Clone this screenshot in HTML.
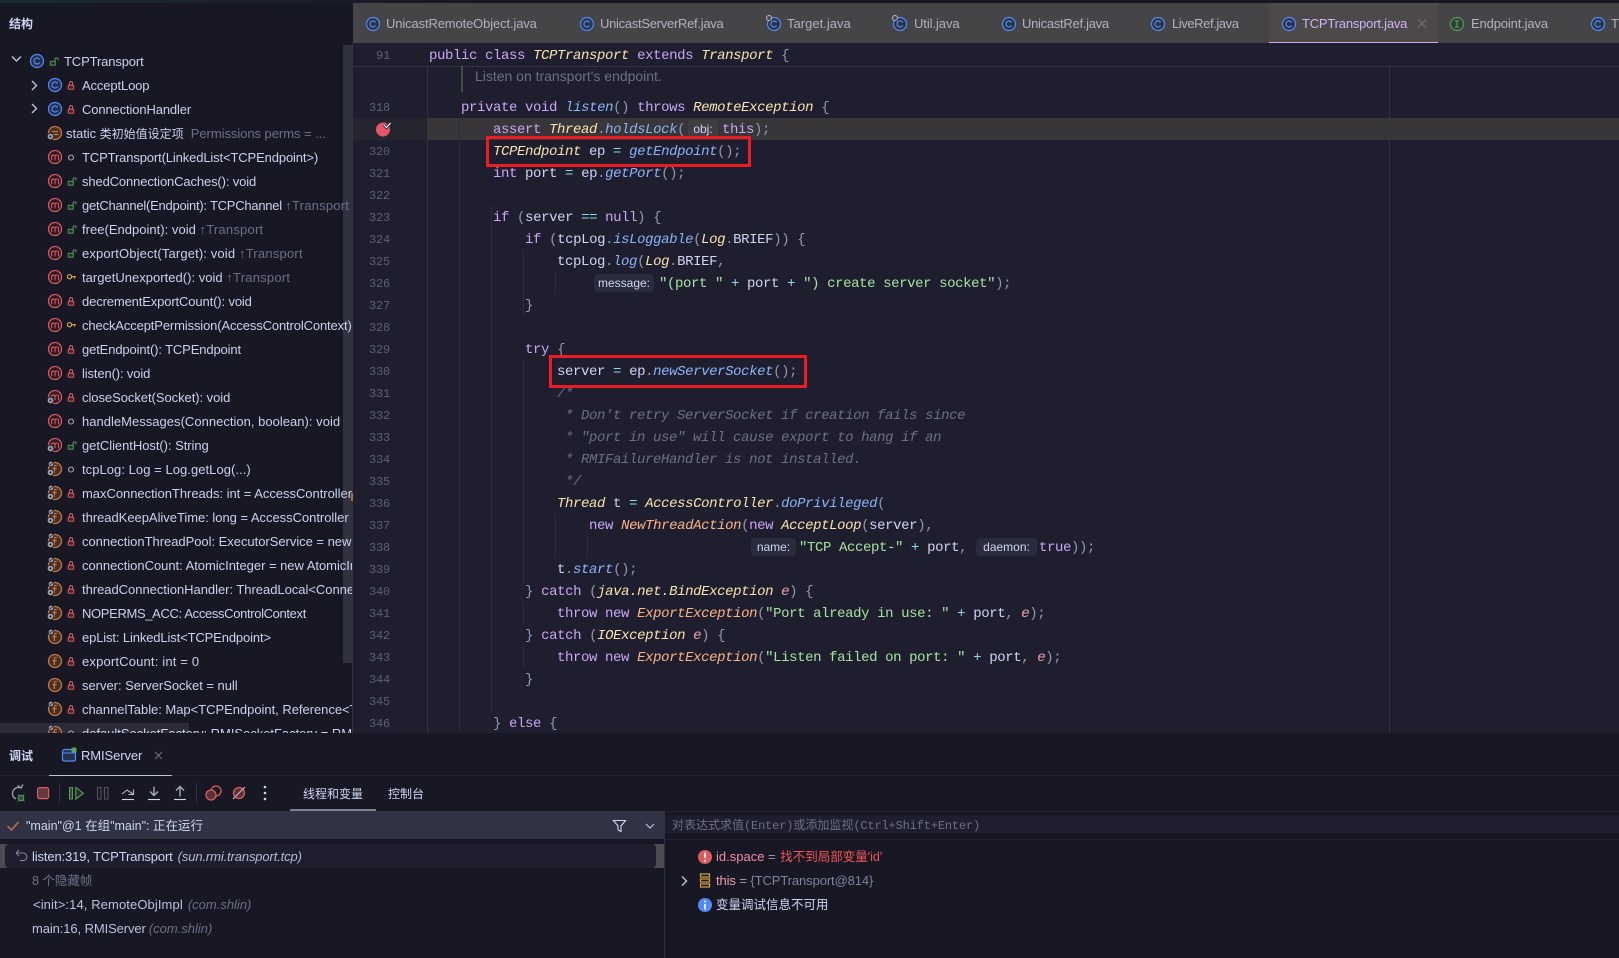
<!DOCTYPE html>
<html><head><meta charset="utf-8"><title>TCPTransport</title>
<style>
html,body{margin:0;padding:0;width:1619px;height:958px;overflow:hidden;background:#181825}
body{position:relative;font-family:"Liberation Sans","Noto Sans CJK SC",sans-serif;font-size:13px;color:#cdd6f4}
.a{position:absolute;white-space:pre}
.b{position:absolute}
.r{position:absolute;left:82px;white-space:pre;line-height:20px;font-size:13px;color:#c9d1ec;letter-spacing:-.13px}
.r i{font-style:normal;font-size:12px;letter-spacing:0}
.g{color:#6c7086}
.u{color:#6c7086;letter-spacing:.22px}
.tab{position:absolute;top:14px;line-height:20px;font-size:13px;color:#aeb3c2;white-space:pre;letter-spacing:-.08px}
.l{position:absolute;left:429px;height:22px;line-height:22px;margin-top:1px;font-family:"Liberation Mono",monospace;font-size:14px;letter-spacing:-.4px;white-space:pre;color:#cdd6f4}
.n{position:absolute;right:1229px;height:22px;line-height:22px;margin-top:1px;font-family:"Liberation Mono",monospace;font-size:12px;color:#5c6075;letter-spacing:-.2px}
.k{color:#cba6f7}.t{color:#f9e2af;font-style:italic}.m{color:#89b4fa;font-style:italic}.s{color:#a6e3a1}
.c{color:#6c7086;font-style:italic}.o{color:#89dceb}.p{color:#9399b2}.e{color:#eba0ac;font-style:italic}.x{color:#fab387;font-style:italic}
.h{position:absolute;height:18px;line-height:18px;border-radius:4px;background:#2a2b3c;color:#cdd6f4;font-size:12px;text-align:center;font-family:"Liberation Sans",sans-serif}
.red{position:absolute;box-sizing:border-box;border:3px solid #ed1c24}
.ig{position:absolute;width:1px;background:#2c2d3e}
svg{position:absolute;overflow:visible}
</style></head><body>

<!-- top strip -->
<div class="b" style="left:0;top:0;width:1619px;height:3px;background:linear-gradient(90deg,#1b2b36,#181825 30%)"></div>

<!-- editor bg -->
<div class="b" style="left:353px;top:43px;width:1266px;height:690px;background:#1e1e2e"></div>
<div class="b" style="left:353px;top:66px;width:1266px;height:1px;background:#313244"></div>
<div class="b" style="left:427px;top:66px;width:1px;height:667px;background:#313244"></div>
<div class="b" style="left:1389px;top:66px;width:1px;height:667px;background:#313244"></div>
<div class="b" style="left:352px;top:43px;width:1px;height:690px;background:#313244"></div>
<div class="b" style="left:461px;top:66px;width:2px;height:26px;background:#44503f"></div>

<!-- current line -->
<div class="b" style="left:353px;top:118px;width:74px;height:22px;background:#25252f"></div>
<div class="b" style="left:428px;top:118px;width:1191px;height:22px;background:#383638"></div>

<!-- indent guides -->
<div class="ig" style="left:459px;top:118px;height:615px"></div>
<div class="ig" style="left:491px;top:206px;height:506px"></div>
<div class="ig" style="left:523px;top:250px;height:66px"></div>
<div class="ig" style="left:523px;top:360px;height:226px"></div>
<div class="ig" style="left:523px;top:602px;height:22px"></div>
<div class="ig" style="left:523px;top:646px;height:22px"></div>
<div class="ig" style="left:555px;top:272px;height:22px"></div>
<div class="ig" style="left:555px;top:514px;height:44px"></div>
<div class="ig" style="left:587px;top:536px;height:22px"></div>

<!-- tabs -->
<div class="b" style="left:353px;top:3px;width:1266px;height:40px;background:#454547"></div>
<div class="b" style="left:1269px;top:3px;width:169px;height:40px;background:#4e4949"></div>
<div class="b" style="left:1269px;top:42px;width:169px;height:1px;background:#cba6f7"></div>
<div class="tab" style="left:386px;letter-spacing:-.13px">UnicastRemoteObject.java</div>
<div class="tab" style="left:600px;letter-spacing:-.28px">UnicastServerRef.java</div>
<div class="tab" style="left:787px;letter-spacing:.02px">Target.java</div>
<div class="tab" style="left:914px">Util.java</div>
<div class="tab" style="left:1022px;letter-spacing:-.28px">UnicastRef.java</div>
<div class="tab" style="left:1172px;letter-spacing:-.42px">LiveRef.java</div>
<div class="tab" style="left:1302px;color:#cdb4f5;letter-spacing:-.2px">TCPTransport.java</div>
<div class="tab" style="left:1471px;letter-spacing:-.14px">Endpoint.java</div>
<div class="tab" style="left:1611px">T</div>

<!-- line numbers -->
<div class="n" style="top:44px">91</div>
<div class="n" style="top:96px">318</div>
<div class="n" style="top:140px">320</div>
<div class="n" style="top:162px">321</div>
<div class="n" style="top:184px">322</div>
<div class="n" style="top:206px">323</div>
<div class="n" style="top:228px">324</div>
<div class="n" style="top:250px">325</div>
<div class="n" style="top:272px">326</div>
<div class="n" style="top:294px">327</div>
<div class="n" style="top:316px">328</div>
<div class="n" style="top:338px">329</div>
<div class="n" style="top:360px">330</div>
<div class="n" style="top:382px">331</div>
<div class="n" style="top:404px">332</div>
<div class="n" style="top:426px">333</div>
<div class="n" style="top:448px">334</div>
<div class="n" style="top:470px">335</div>
<div class="n" style="top:492px">336</div>
<div class="n" style="top:514px">337</div>
<div class="n" style="top:536px">338</div>
<div class="n" style="top:558px">339</div>
<div class="n" style="top:580px">340</div>
<div class="n" style="top:602px">341</div>
<div class="n" style="top:624px">342</div>
<div class="n" style="top:646px">343</div>
<div class="n" style="top:668px">344</div>
<div class="n" style="top:690px">345</div>
<div class="n" style="top:712px;height:20px;overflow:hidden">346</div>

<!-- code -->
<div class="l" style="top:44px"><span class="k">public class</span> <span class="t">TCPTransport</span> <span class="k">extends</span> <span class="t">Transport</span> <span class="p">{</span></div>
<div class="a" style="left:475px;top:66px;line-height:21px;color:#6c7086;font-size:14px;letter-spacing:-.01px">Listen on transport's endpoint.</div>
<div class="l" style="top:96px">    <span class="k">private void</span> <span class="m">listen</span><span class="p">()</span> <span class="k">throws</span> <span class="t">RemoteException</span> <span class="p">{</span></div>
<div class="l" style="top:118px">        <span class="k">assert</span> <span class="t">Thread</span><span class="p">.</span><span class="m">holdsLock</span><span class="p">(</span></div>
<div class="h" style="left:688px;top:120px;width:30px;background:#403e42">obj:</div>
<div class="l" style="top:118px;left:722px"><span class="k">this</span><span class="p">);</span></div>
<div class="l" style="top:140px">        <span class="t">TCPEndpoint</span> ep <span class="o">=</span> <span class="m">getEndpoint</span><span class="p">();</span></div>
<div class="l" style="top:162px">        <span class="k">int</span> port <span class="o">=</span> ep<span class="p">.</span><span class="m">getPort</span><span class="p">();</span></div>
<div class="l" style="top:206px">        <span class="k">if</span> <span class="p">(</span>server <span class="o">==</span> <span class="k">null</span><span class="p">) {</span></div>
<div class="l" style="top:228px">            <span class="k">if</span> <span class="p">(</span>tcpLog<span class="p">.</span><span class="m">isLoggable</span><span class="p">(</span><span class="t">Log</span><span class="p">.</span>BRIEF<span class="p">)) {</span></div>
<div class="l" style="top:250px">                tcpLog<span class="p">.</span><span class="m">log</span><span class="p">(</span><span class="t">Log</span><span class="p">.</span>BRIEF<span class="p">,</span></div>
<div class="h" style="left:594px;top:274px;width:60px">message:</div>
<div class="l" style="top:272px;left:659px"><span class="s">"(port "</span> <span class="o">+</span> port <span class="o">+</span> <span class="s">") create server socket"</span><span class="p">);</span></div>
<div class="l" style="top:294px">            <span class="p">}</span></div>
<div class="l" style="top:338px">            <span class="k">try</span> <span class="p">{</span></div>
<div class="l" style="top:360px">                server <span class="o">=</span> ep<span class="p">.</span><span class="m">newServerSocket</span><span class="p">();</span></div>
<div class="l" style="top:382px">                <span class="c">/*</span></div>
<div class="l" style="top:404px">                <span class="c"> * Don't retry ServerSocket if creation fails since</span></div>
<div class="l" style="top:426px">                <span class="c"> * "port in use" will cause export to hang if an</span></div>
<div class="l" style="top:448px">                <span class="c"> * RMIFailureHandler is not installed.</span></div>
<div class="l" style="top:470px">                <span class="c"> */</span></div>
<div class="l" style="top:492px">                <span class="t">Thread</span> t <span class="o">=</span> <span class="t">AccessController</span><span class="p">.</span><span class="m">doPrivileged</span><span class="p">(</span></div>
<div class="l" style="top:514px">                    <span class="k">new</span> <span class="x">NewThreadAction</span><span class="p">(</span><span class="k">new</span> <span class="t">AcceptLoop</span><span class="p">(</span>server<span class="p">),</span></div>
<div class="h" style="left:751px;top:538px;width:45px">name:</div>
<div class="l" style="top:536px;left:799px"><span class="s">"TCP Accept-"</span> <span class="o">+</span> port<span class="p">,</span></div>
<div class="h" style="left:976px;top:538px;width:61px">daemon:</div>
<div class="l" style="top:536px;left:1039px"><span class="k">true</span><span class="p">));</span></div>
<div class="l" style="top:558px">                t<span class="p">.</span><span class="m">start</span><span class="p">();</span></div>
<div class="l" style="top:580px">            <span class="p">}</span> <span class="k">catch</span> <span class="p">(</span><span class="t">java.net.BindException</span> <span class="e">e</span><span class="p">) {</span></div>
<div class="l" style="top:602px">                <span class="k">throw new</span> <span class="x">ExportException</span><span class="p">(</span><span class="s">"Port already in use: "</span> <span class="o">+</span> port<span class="p">,</span> <span class="e">e</span><span class="p">);</span></div>
<div class="l" style="top:624px">            <span class="p">}</span> <span class="k">catch</span> <span class="p">(</span><span class="t">IOException</span> <span class="e">e</span><span class="p">) {</span></div>
<div class="l" style="top:646px">                <span class="k">throw new</span> <span class="x">ExportException</span><span class="p">(</span><span class="s">"Listen failed on port: "</span> <span class="o">+</span> port<span class="p">,</span> <span class="e">e</span><span class="p">);</span></div>
<div class="l" style="top:668px">            <span class="p">}</span></div>
<div class="l" style="top:712px;height:20px;overflow:hidden">        <span class="p">}</span> <span class="k">else</span> <span class="p">{</span></div>

<!-- red boxes -->
<div class="red" style="left:486px;top:136px;width:265px;height:31px"></div>
<div class="red" style="left:549px;top:355px;width:258px;height:33px"></div>

<!-- left tree -->
<div class="a" style="left:9px;top:14px;line-height:20px;font-size:12px;font-weight:bold;color:#cdd6f4">结构</div>
<div class="b" style="left:0;top:44px;width:352px;height:689px;overflow:hidden">
<div class="b" style="left:343px;top:1px;width:9px;height:618px;background:#313240"></div>
<div style="position:absolute;left:0;top:-44px;width:352px;height:733px">
<div class="r" style="left:64px;top:52px">TCPTransport</div>
<div class="r" style="top:76px">AcceptLoop</div>
<div class="r" style="top:100px">ConnectionHandler</div>
<div class="r" style="left:66px;top:124px;letter-spacing:-.05px">static <i>类初始值设定项</i>  <span class="g">Permissions perms = ...</span></div>
<div class="r" style="top:148px">TCPTransport(LinkedList&lt;TCPEndpoint&gt;)</div>
<div class="r" style="top:172px">shedConnectionCaches(): void</div>
<div class="r" style="top:196px;letter-spacing:-.25px">getChannel(Endpoint): TCPChannel <span class="u">↑Transport</span></div>
<div class="r" style="top:220px;letter-spacing:.02px">free(Endpoint): void <span class="u">↑Transport</span></div>
<div class="r" style="top:244px;letter-spacing:.14px">exportObject(Target): void <span class="u">↑Transport</span></div>
<div class="r" style="top:268px;letter-spacing:.02px">targetUnexported(): void <span class="u">↑Transport</span></div>
<div class="r" style="top:292px">decrementExportCount(): void</div>
<div class="r" style="top:316px">checkAcceptPermission(AccessControlContext)</div>
<div class="r" style="top:340px">getEndpoint(): TCPEndpoint</div>
<div class="r" style="top:364px">listen(): void</div>
<div class="r" style="top:388px;letter-spacing:-.05px">closeSocket(Socket): void</div>
<div class="r" style="top:412px;letter-spacing:.02px">handleMessages(Connection, boolean): void</div>
<div class="r" style="top:436px;letter-spacing:-.05px">getClientHost(): String</div>
<div class="r" style="top:460px;letter-spacing:.05px">tcpLog: Log = Log.getLog(...)</div>
<div class="r" style="top:484px;letter-spacing:-.03px">maxConnectionThreads: int = AccessController</div>
<div class="r" style="top:508px;letter-spacing:-.03px">threadKeepAliveTime: long = AccessController</div>
<div class="r" style="top:532px;letter-spacing:-.03px">connectionThreadPool: ExecutorService = new</div>
<div class="r" style="top:556px;letter-spacing:-.03px">connectionCount: AtomicInteger = new AtomicInteger</div>
<div class="r" style="top:580px;letter-spacing:-.03px">threadConnectionHandler: ThreadLocal&lt;ConnectionHandler&gt;</div>
<div class="r" style="top:604px;letter-spacing:-.35px">NOPERMS_ACC: AccessControlContext</div>
<div class="r" style="top:628px">epList: LinkedList&lt;TCPEndpoint&gt;</div>
<div class="r" style="top:652px;letter-spacing:.17px">exportCount: int = 0</div>
<div class="r" style="top:676px;letter-spacing:-.03px">server: ServerSocket = null</div>
<div class="r" style="top:700px;letter-spacing:-.03px">channelTable: Map&lt;TCPEndpoint, Reference&lt;Target&gt;&gt;</div>
<div class="r" style="top:724px;letter-spacing:-.03px">defaultSocketFactory: RMISocketFactory = RMISocketFactory</div>
<div class="b" style="left:0;top:723px;width:189px;height:10px;background:rgba(255,255,255,.09)"></div>

<svg width="352" height="733" style="left:0;top:0">
<defs>
<g id="C"><circle cx="8" cy="8" r="6.5" fill="#23304f" stroke="#548af7" stroke-width="1.2"/><path d="M10.3 6.1A3 3 0 1 0 10.3 9.9" fill="none" stroke="#548af7" stroke-width="1.2" stroke-linecap="round"/></g>
<g id="M"><circle cx="8" cy="8" r="6.5" fill="#2c1b23" stroke="#d8595c" stroke-width="1.3"/><path d="M4.6 11.3V6.2M4.6 7.3c0-1.7 3.4-1.7 3.400 0V11.300M8 7.3c0-1.7 3.4-1.7 3.400 0V11.300" fill="none" stroke="#d8595c" stroke-width="1.1"/></g>
<g id="F"><circle cx="8" cy="8" r="6.5" fill="#4a2f20" stroke="#c2794a" stroke-width="1.3"/><path d="M10 4.6c-1.6-.5-2.7 0-2.7 1.5V12M5.5 7.6h4.2" fill="none" stroke="#c2794a" stroke-width="1.2"/></g>
<g id="S"><circle cx="8" cy="8" r="6.5" fill="#4a2f20" stroke="#c2794a" stroke-width="1.3"/><path d="M4.8 6.5h6.4M4.8 9.5h6.4" fill="none" stroke="#c2794a" stroke-width="1.2"/></g>
<g id="pb"><circle cx="3.5" cy="11.500" r="3.300" fill="#a2a3ad" stroke="#181825" stroke-width=".8"/><circle cx="3.5" cy="11.500" r="1.100" fill="#2a2a36"/></g>
<g id="pt"><circle cx="4" cy="3" r="2.700" fill="#a2a3ad" stroke="#181825" stroke-width=".7"/><path d="M2.800 4.200L5.500 1.600" stroke="#2a2a36" stroke-width="1"/></g>
<g id="lk"><rect x="3.3" y="5.3" width="5.4" height="3.9" fill="#3d2128" stroke="#db5c5c"/><path d="M4.5 5V3a1.5 1.5 0 0 1 3 0V5" fill="none" stroke="#db5c5c"/></g>
<g id="op"><rect x="3.3" y="5.3" width="4.9" height="3.9" fill="#203020" stroke="#57965c"/><path d="M8 5V3.4a1.5 1.5 0 0 1 3 0V4.5" fill="none" stroke="#57965c"/></g>
<g id="oo"><circle cx="6" cy="5.5" r="2.5" fill="none" stroke="#a9acb8" stroke-width="1.1"/></g>
<g id="pr"><circle cx="4.500" cy="4.700" r="2.100" fill="none" stroke="#d9b04a" stroke-width="1.100"/><path d="M6.600 4.700h4.400M9.500 4.700v1.800" fill="none" stroke="#d9b04a" stroke-width="1.100"/></g>
<path id="cr" d="M0 0l4.500 4.500l-4.500 4.500" fill="none" stroke="#bac2de" stroke-width="1.4"/>
</defs>
<path d="M12 56.500l4.500 4.500l4.500-4.500" fill="none" stroke="#bac2de" stroke-width="1.400"/>
<use href="#cr" x="32" y="81"/><use href="#cr" x="32" y="104"/>
<use href="#C" x="29" y="53"/><use href="#op" x="47" y="56"/>
<use href="#C" x="47" y="77"/><use href="#lk" x="65" y="80"/>
<use href="#C" x="47" y="101"/><use href="#lk" x="65" y="104"/>
<use href="#S" x="47" y="125"/><use href="#pb" x="47" y="125"/>
<use href="#M" x="47" y="149"/><use href="#oo" x="65" y="152"/>
<use href="#M" x="47" y="173"/><use href="#op" x="65" y="176"/>
<use href="#M" x="47" y="197"/><use href="#op" x="65" y="200"/>
<use href="#M" x="47" y="221"/><use href="#op" x="65" y="224"/>
<use href="#M" x="47" y="245"/><use href="#op" x="65" y="248"/>
<use href="#M" x="47" y="269"/><use href="#pr" x="65" y="272"/>
<use href="#M" x="47" y="293"/><use href="#lk" x="65" y="296"/>
<use href="#M" x="47" y="317"/><use href="#pr" x="65" y="320"/>
<use href="#M" x="47" y="341"/><use href="#lk" x="65" y="344"/>
<use href="#M" x="47" y="365"/><use href="#lk" x="65" y="368"/>
<use href="#M" x="47" y="389"/><use href="#pb" x="47" y="389"/><use href="#lk" x="65" y="392"/>
<use href="#M" x="47" y="413"/><use href="#oo" x="65" y="416"/>
<use href="#M" x="47" y="437"/><use href="#pb" x="47" y="437"/><use href="#op" x="65" y="440"/>
<use href="#F" x="47" y="461"/><use href="#pb" x="47" y="461"/><use href="#pt" x="47" y="461"/><use href="#oo" x="65" y="464"/>
<use href="#F" x="47" y="485"/><use href="#pb" x="47" y="485"/><use href="#pt" x="47" y="485"/><use href="#lk" x="65" y="488"/>
<use href="#F" x="47" y="509"/><use href="#pb" x="47" y="509"/><use href="#pt" x="47" y="509"/><use href="#lk" x="65" y="512"/>
<use href="#F" x="47" y="533"/><use href="#pb" x="47" y="533"/><use href="#pt" x="47" y="533"/><use href="#lk" x="65" y="536"/>
<use href="#F" x="47" y="557"/><use href="#pb" x="47" y="557"/><use href="#pt" x="47" y="557"/><use href="#lk" x="65" y="560"/>
<use href="#F" x="47" y="581"/><use href="#pb" x="47" y="581"/><use href="#pt" x="47" y="581"/><use href="#lk" x="65" y="584"/>
<use href="#F" x="47" y="605"/><use href="#pb" x="47" y="605"/><use href="#pt" x="47" y="605"/><use href="#lk" x="65" y="608"/>
<use href="#F" x="47" y="629"/><use href="#pt" x="47" y="629"/><use href="#lk" x="65" y="632"/>
<use href="#F" x="47" y="653"/><use href="#lk" x="65" y="656"/>
<use href="#F" x="47" y="677"/><use href="#lk" x="65" y="680"/>
<use href="#F" x="47" y="701"/><use href="#pt" x="47" y="701"/><use href="#lk" x="65" y="704"/>
<use href="#F" x="47" y="725"/><use href="#pt" x="47" y="725"/><use href="#oo" x="65" y="728"/>
</svg>
</div>
</div>

<!-- bottom panel -->
<div class="b" style="left:0;top:733px;width:1619px;height:225px;background:#181825"></div>
<div class="b" style="left:0;top:775px;width:1619px;height:1px;background:#222232"></div>
<div class="a" style="left:9px;top:746px;line-height:20px;font-size:12px;font-weight:bold">调试</div>
<div class="a" style="left:81px;top:746px;line-height:20px;font-size:13px;color:#cdd6f4;letter-spacing:-.1px">RMIServer</div>
<div class="b" style="left:49px;top:775px;width:123px;height:1px;background:#bac2de"></div>
<div class="a" style="left:303px;top:784px;line-height:20px;font-size:12px">线程和变量</div>
<div class="a" style="left:388px;top:784px;line-height:20px;font-size:12px">控制台</div>
<div class="b" style="left:290px;top:809px;width:86px;height:2px;background:#7f8091"></div>

<!-- thread bar -->
<div class="b" style="left:0;top:811px;width:664px;height:28px;background:#313244"></div>
<div class="a" style="left:26px;top:816px;line-height:20px;font-size:12.500px">"main"@1 在组"main": 正在运行</div>

<!-- frames -->
<div class="b" style="left:0;top:844px;width:664px;height:24px;background:#4e4c50"></div>
<div class="b" style="left:5px;top:844px;width:651px;height:24px;background:#1e1e2e;border-radius:4px"></div>
<div class="a" style="left:32px;top:847px;line-height:20px;font-size:13px;letter-spacing:-.13px">listen:319, TCPTransport<span style="font-style:italic;color:#b4bbd8;margin-left:5px">(sun.rmi.transport.tcp)</span></div>
<div class="a" style="left:32px;top:871px;line-height:20px;font-size:12.500px;color:#6c7086">8 个隐藏帧</div>
<div class="a" style="left:33px;top:895px;line-height:20px;font-size:13px;color:#bac2de;letter-spacing:.1px">&lt;init&gt;:14, RemoteObjImpl<span class="g" style="font-style:italic;margin-left:5px;letter-spacing:0">(com.shlin)</span></div>
<div class="a" style="left:32px;top:919px;line-height:20px;font-size:13px;color:#bac2de;letter-spacing:-.1px">main:16, RMIServer<span class="g" style="font-style:italic;margin-left:3px;letter-spacing:0">(com.shlin)</span></div>

<!-- right debugger -->
<div class="b" style="left:664px;top:811px;width:1px;height:147px;background:#313244"></div>
<div class="b" style="left:665px;top:811px;width:954px;height:1px;background:#222232"></div>
<div class="b" style="left:665px;top:816px;width:954px;height:17px;background:#1e1e2e"></div>
<div class="b" style="left:665px;top:839px;width:954px;height:1px;background:#222232"></div>
<div class="a" style="left:672px;top:816px;line-height:20px;font-size:12px;color:#6c7086;font-family:'Liberation Mono','Noto Sans CJK SC',monospace;letter-spacing:-.16px"><span style="letter-spacing:0">对表达式求值</span>(Enter)<span style="letter-spacing:0">或添加监视</span>(Ctrl+Shift+Enter)</div>
<div class="a" style="left:716px;top:847px;line-height:20px;font-size:13px"><span style="color:#f38ba8">id.space</span> <span style="color:#9399b2">=</span> <span style="color:#f25555;font-size:12.500px;margin-left:1px">找不到局部变量'id'</span></div>
<div class="a" style="left:716px;top:871px;line-height:20px;font-size:13px;letter-spacing:-.1px"><span style="color:#eba0ac">this</span> <span style="color:#9399b2">=</span> <span style="color:#7f849c">{TCPTransport@814}</span></div>
<div class="a" style="left:716px;top:895px;line-height:20px;font-size:12.500px;color:#cdd6f4">变量调试信息不可用</div>

<!-- icons overlay -->
<svg width="1619" height="958" style="left:0;top:0;pointer-events:none">
<defs>
<g id="CC"><circle cx="7" cy="7" r="6.500" fill="#2a3348" stroke="#548af7" stroke-width="1.200"/><path d="M9.300 5.100A3 3 0 1 0 9.300 8.900" fill="none" stroke="#548af7" stroke-width="1.200" stroke-linecap="round"/></g>
</defs>
<!-- tab icons -->
<use href="#CC" x="366" y="17"/>
<use href="#CC" x="580" y="17"/>
<use href="#CC" x="767" y="17"/><circle cx="769" cy="18" r="2.500" fill="#45475a" stroke="#bbb" stroke-width="1"/>
<use href="#CC" x="893" y="17"/><circle cx="895" cy="18" r="2.500" fill="#45475a" stroke="#bbb" stroke-width="1"/>
<use href="#CC" x="1002" y="17"/>
<use href="#CC" x="1151" y="17"/>
<use href="#CC" x="1282" y="17"/>
<circle cx="1457" cy="24" r="6.500" fill="#2f4030" stroke="#57965c" stroke-width="1.200"/><path d="M1455 21h4M1457 21v6M1455 27h4" stroke="#57965c" stroke-width="1.200" fill="none"/>
<use href="#CC" x="1591" y="17"/>
<path d="M1418 19.500l8 8M1426 19.500l-8 8" stroke="#6c7086" stroke-width="1.100"/>

<!-- breakpoint -->
<circle cx="383" cy="129.500" r="7" fill="#e5566a"/>
<path d="M384 125l2.500 2.500l4-4.500" fill="none" stroke="#25252f" stroke-width="3"/>
<path d="M384 125l2.500 2.500l4-4.500" fill="none" stroke="#fff" stroke-width="1.200"/>
<rect x="351" y="493" width="2" height="8" fill="#a5703d"/>

<!-- run tab icon -->
<rect x="62.500" y="749.500" width="13" height="11.500" rx="2" fill="#25324f" stroke="#548af7" stroke-width="1.200"/>
<path d="M63 753h12" stroke="#548af7" stroke-width="1"/>
<circle cx="74" cy="750" r="2.800" fill="#57a55c"/>
<path d="M155 752l7 7M162 752l-7 7" stroke="#6c7086" stroke-width="1.100"/>

<!-- toolbar -->
<path d="M21 788A6 6 0 1 0 16 799M17.500 785.500l3.500 2.500l2-3.500" fill="none" stroke="#a9acb8" stroke-width="1.200"/>
<circle cx="21" cy="798" r="2.600" fill="#2b4a30" stroke="#57965c" stroke-width="1.300"/><path d="M18 794.500l1.200 1.200M24 794.500l-1.200 1.200M17.500 801.500l1.300-1M24.500 801.500l-1.300-1" stroke="#57965c" fill="none"/>
<rect x="37.600" y="787.600" width="11" height="11" rx="2" fill="#64393d" stroke="#db5c5c" stroke-width="1.200"/>
<path d="M59.500 783v20M196.500 783v20" stroke="#313244"/>
<rect x="69.500" y="787.500" width="3" height="11.500" fill="#2b4a30" stroke="#57965c"/>
<path d="M75.800 787.500l7.500 5.700l-7.500 5.800z" fill="#203020" stroke="#57965c" stroke-width="1.200"/>
<rect x="97.500" y="787.500" width="3.500" height="11.500" fill="none" stroke="#55565f"/><rect x="104.500" y="787.500" width="3.500" height="11.500" fill="none" stroke="#55565f"/>
<path d="M122 799.500h12" stroke="#cdd6f4" stroke-width="1.100"/><path d="M122 794l5-4l6 4M133.500 789.500v5h-5" fill="none" stroke="#b5b8c6" stroke-width="1.100"/>
<path d="M148 799.500h12" stroke="#cdd6f4" stroke-width="1.100"/><path d="M154 786.500v9M150 791.500l4 4l4-4" fill="none" stroke="#a9acb8" stroke-width="1.400"/>
<path d="M174 799.500h12" stroke="#cdd6f4" stroke-width="1.100"/><path d="M180 796.500v-10M176 790.500l4-4l4 4" fill="none" stroke="#a9acb8" stroke-width="1.400"/>
<circle cx="216" cy="791" r="5" fill="none" stroke="#db5c5c" stroke-width="1.300"/><circle cx="211" cy="795" r="5" fill="#5a3236" stroke="#db5c5c" stroke-width="1.300"/>
<circle cx="239" cy="793" r="5.500" fill="#5a3236" stroke="#db5c5c" stroke-width="1.300"/><path d="M233 799l12-12" stroke="#b5b6bf" stroke-width="1.200"/>
<circle cx="265" cy="787" r="1.300" fill="#cdd6f4"/><circle cx="265" cy="793" r="1.300" fill="#cdd6f4"/><circle cx="265" cy="799" r="1.300" fill="#cdd6f4"/>

<!-- thread bar icons -->
<path d="M7.500 826l4 4l7-8" fill="none" stroke="#c2794a" stroke-width="1.400"/>
<path d="M613.500 820.500h12l-4.500 5.500v5.500l-3-1.500v-4z" fill="none" stroke="#cdd6f4" stroke-width="1.100"/>
<path d="M646 824l4 4l4-4" fill="none" stroke="#bac2de" stroke-width="1.200"/>

<!-- frame back icon -->
<path d="M16 853h7a3.800 3.800 0 0 1 0 7.600h-3M16 853l3-3M16 853l3 3" fill="none" stroke="#7f849c" stroke-width="1.100"/>

<!-- right icons -->
<circle cx="705" cy="857" r="7" fill="#db5c5c"/><path d="M705 852.500v5.500" stroke="#fff" stroke-width="1.600"/><circle cx="705" cy="860.800" r="1" fill="#fff"/>
<path d="M682 876.500l4.500 4.500l-4.500 4.500" fill="none" stroke="#bac2de" stroke-width="1.400"/>
<g fill="none" stroke="#d9a343" stroke-width="1.200"><rect x="700.500" y="874" width="9" height="3"/><rect x="700.500" y="879" width="9" height="3"/><rect x="700.500" y="884" width="9" height="3"/></g>
<circle cx="705" cy="905" r="7" fill="#548af7"/><circle cx="705" cy="901.500" r="1" fill="#fff"/><path d="M705 904v5.500" stroke="#fff" stroke-width="1.600"/>
</svg>
</body></html>
